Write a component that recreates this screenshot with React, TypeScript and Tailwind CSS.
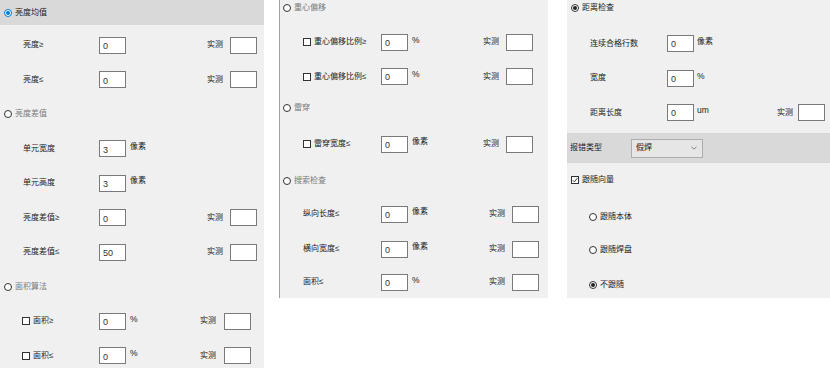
import React from "react";

const font = "font-['Liberation_Sans','Noto_Sans_CJK_SC',sans-serif]";

function Radio({ checked, tone = "blue" }: { checked?: boolean; tone?: "blue" | "dark" }) {
  const ring = checked && tone === "blue" ? "border-[#0078d7]" : "border-[#333333]";
  const dot = tone === "blue" ? "bg-[#0078d7]" : "bg-[#222222]";
  return (
    <span
      className={`flex h-[8px] w-[8px] shrink-0 items-center justify-center rounded-full border bg-white ${ring}`}
    >
      {checked && <span className={`h-[4px] w-[4px] rounded-full ${dot}`} />}
    </span>
  );
}

function Check({ checked }: { checked?: boolean }) {
  return (
    <span className="flex h-[8px] w-[8px] shrink-0 items-center justify-center border border-[#333333] bg-white">
      {checked && (
        <svg width="6" height="6" viewBox="0 0 6 6">
          <path d="M0.8 3.2 L2.4 4.8 L5.3 1.2" fill="none" stroke="#222" strokeWidth="0.9" />
        </svg>
      )}
    </span>
  );
}

function Box({ value, className }: { value?: string; className?: string }) {
  return (
    <div
      className={`flex h-[17px] items-center border border-[#7a7a7a] bg-white pl-[3px] pt-[3px] text-[9px] text-[#333] ${className ?? "w-[27px]"}`}
    >
      {value}
    </div>
  );
}

function RadioRow({
  label,
  checked,
  disabled,
  tone,
  className,
}: {
  label: string;
  checked?: boolean;
  disabled?: boolean;
  tone?: "blue" | "dark";
  className: string;
}) {
  return (
    <div className={`flex shrink-0 items-center gap-[3px] ${className}`}>
      <Radio checked={checked} tone={tone} />
      <span className={`text-[8px] ${disabled ? "text-[#7a7a7a]" : "text-[#1a1a1a]"}`}>{label}</span>
    </div>
  );
}

interface FieldProps {
  label: string;
  value: string;
  unit?: string;
  check?: boolean;
  measure?: boolean;
  cols: string;
  height: string;
}

function Field({ label, value, unit, check, measure, cols, height }: FieldProps) {
  const latin = unit === "%" || unit === "um";
  return (
    <div className={`grid shrink-0 items-center ${cols} ${height}`}>
      <span />
      <span className="flex items-center gap-[3px] text-[8px] text-[#1a1a1a]">
        {check && <Check />}
        {label}
      </span>
      <Box value={value} />
      <span
        className={`-translate-y-[2px] pl-[4px] text-[#222] ${latin ? "text-[8.5px]" : "text-[8px]"}`}
      >
        {unit}
      </span>
      {measure ? <span className="text-[8px] text-[#1a1a1a]">实测</span> : <span />}
      {measure ? <Box /> : <span />}
    </div>
  );
}

const p1 = "grid-cols-[23px_76px_27px_81px_23px_27px]";
const p1c = "grid-cols-[22px_77px_27px_74px_24px_27px]";
const p2c = "grid-cols-[23px_78px_27px_75px_23px_27px]";
const p2 = "grid-cols-[23px_78px_27px_81px_23px_26px]";
const p3 = "grid-cols-[23px_77px_26px_84px_21px_27px]";

export default function App() {
  return (
    <div className={`flex h-[368px] w-[830px] overflow-hidden bg-white ${font}`}>
      {/* brightness panel */}
      <div className="flex h-[368px] w-[264px] shrink-0 flex-col overflow-hidden bg-[#f0f0f0]">
        <RadioRow label="亮度均值" checked className="h-[25px] bg-[#d9d9d9] pl-[4px]" />
        <div className="h-[3px] shrink-0" />
        <Field label="亮度≥" value="0" measure cols={p1} height="h-[34.5px]" />
        <Field label="亮度≤" value="0" measure cols={p1} height="h-[34.5px]" />
        <RadioRow label="亮度差值" disabled className="h-[34.5px] pl-[4px]" />
        <Field label="单元宽度" value="3" unit="像素" cols={p1} height="h-[34.5px]" />
        <Field label="单元高度" value="3" unit="像素" cols={p1} height="h-[34.5px]" />
        <Field label="亮度差值≥" value="0" measure cols={p1} height="h-[34.5px]" />
        <Field label="亮度差值≤" value="50" measure cols={p1} height="h-[34.5px]" />
        <RadioRow label="面积算法" disabled className="h-[34.5px] pl-[4px]" />
        <Field label="面积≥" value="0" unit="%" check measure cols={p1c} height="h-[34.5px]" />
        <Field label="面积≤" value="0" unit="%" check measure cols={p1c} height="h-[34.5px]" />
      </div>

      {/* centroid / through / search panel */}
      <div className="ml-[15px] flex h-[298px] w-[269px] shrink-0 flex-col overflow-hidden border-l border-[#a0a0a0] bg-[#f0f0f0]">
        <RadioRow label="重心偏移" disabled className="h-[15px] pl-[3px]" />
        <div className="h-[10px] shrink-0" />
        <Field label="重心偏移比例≥" value="0" unit="%" check measure cols={p2c} height="h-[34px]" />
        <Field label="重心偏移比例≤" value="0" unit="%" check measure cols={p2c} height="h-[35px]" />
        <RadioRow label="雷穿" disabled className="h-[28px] pl-[3px]" />
        <Field label="雷穿宽度≤" value="0" unit="像素" check measure cols={p2c} height="h-[44px]" />
        <RadioRow label="搜索检查" disabled className="h-[30px] pl-[3px]" />
        <Field label="纵向长度≤" value="0" unit="像素" measure cols={p2} height="h-[36px]" />
        <Field label="横向宽度≤" value="0" unit="像素" measure cols={p2} height="h-[34px]" />
        <Field label="面积≤" value="0" unit="%" measure cols={p2} height="h-[32px]" />
      </div>

      {/* distance panel */}
      <div className="ml-[19px] flex h-[298px] w-[263px] shrink-0 flex-col overflow-hidden bg-[#f0f0f0]">
        <RadioRow label="距离检查" checked tone="dark" className="h-[15px] pl-[4px]" />
        <div className="h-[11px] shrink-0" />
        <Field label="连续合格行数" value="0" unit="像素" cols={p3} height="h-[35px]" />
        <Field label="宽度" value="0" unit="%" cols={p3} height="h-[34px]" />
        <Field label="距离长度" value="0" unit="um" measure cols={p3} height="h-[35px]" />
        <div className="h-[3px] shrink-0" />
        <div className="flex h-[30px] shrink-0 items-center bg-[#d9d9d9] pl-[3px]">
          <span className="w-[61px] text-[8px] text-[#1a1a1a]">报错类型</span>
          <div className="flex h-[19px] w-[72px] items-center justify-between border border-[#adadad] bg-[#e6e6e6] pl-[4px] pr-[5px]">
            <span className="text-[8px] text-[#1a1a1a]">假焊</span>
            <svg width="6" height="4" viewBox="0 0 6 4">
              <path d="M0.5 0.8 L3 3.2 L5.5 0.8" fill="none" stroke="#666" strokeWidth="0.8" />
            </svg>
          </div>
        </div>
        <div className="flex h-[34px] shrink-0 items-center gap-[3px] pl-[4px]">
          <Check checked />
          <span className="text-[8px] text-[#1a1a1a]">跟随向量</span>
        </div>
        <RadioRow label="跟随本体" className="h-[40px] pl-[22px]" />
        <RadioRow label="跟随焊盘" className="h-[26px] pl-[22px]" />
        <RadioRow label="不跟随" checked tone="dark" className="h-[44px] pl-[22px]" />
      </div>
    </div>
  );
}
